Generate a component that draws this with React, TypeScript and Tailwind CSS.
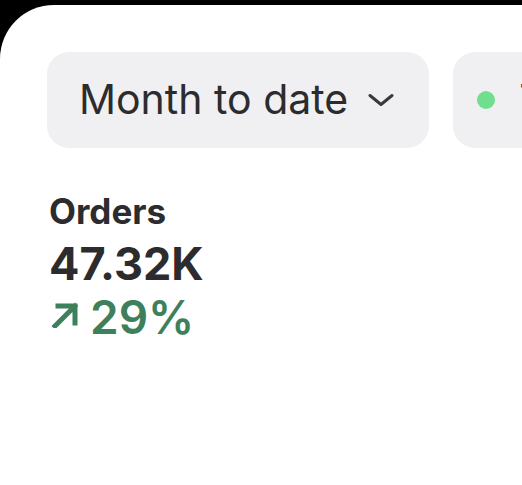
import { useState } from "react";

function Chevron() {
  return (
    <svg width="26" height="14" viewBox="0 0 26 14" fill="none" className="shrink-0">
      <path d="M2 2.5l11 9 11-9" stroke="#3a3a3c" strokeWidth="3" strokeLinecap="round" strokeLinejoin="round" />
    </svg>
  );
}

function ArrowUp() {
  return (
    <svg width="28" height="28" viewBox="0 0 28 28" fill="none" className="ml-[1px] mt-[9px] shrink-0">
      <path d="M5 26L25 6M8 6h17v17" stroke="#3e7f5c" strokeWidth="5" strokeLinecap="square" />
    </svg>
  );
}

export default function App() {
  const [range] = useState("Month to date");

  return (
    <div className="min-h-[485px] bg-black pt-[5px] font-['Inter',sans-serif]">
      <div className="min-h-[480px] overflow-hidden rounded-tl-[54px] bg-white pl-[47px] pt-[47px]">
        <div className="flex gap-[24px] whitespace-nowrap">
          <button className="flex h-[96px] shrink-0 items-center gap-[20px] rounded-[22px] bg-[#f0f0f2] pl-[32px] pr-[35px] text-[41px] text-[#2c2c2e]">
            {range}
            <Chevron />
          </button>
          <button className="flex h-[96px] shrink-0 items-center gap-[24px] rounded-[22px] bg-[#f0f0f2] pl-[24px] pr-[34px] text-[41px] text-[#2c2c2e]">
            <span className="h-[18px] w-[18px] rounded-full bg-[#6fdf8f]" />
            Today
          </button>
        </div>

        <div className="mt-[43px] pl-[2px]">
          <div className="text-[35px] font-bold leading-[40px] text-[#2c2c2e]">Orders</div>
          <div className="mt-[8px] text-[45px] font-bold leading-[50px] text-[#2c2c2e]">47.32K</div>
          <div className="mt-[2px] flex items-start gap-[12px] text-[46px] font-semibold leading-[52px] text-[#3e7f5c]">
            <ArrowUp />
            29%
          </div>
        </div>
      </div>
    </div>
  );
}
